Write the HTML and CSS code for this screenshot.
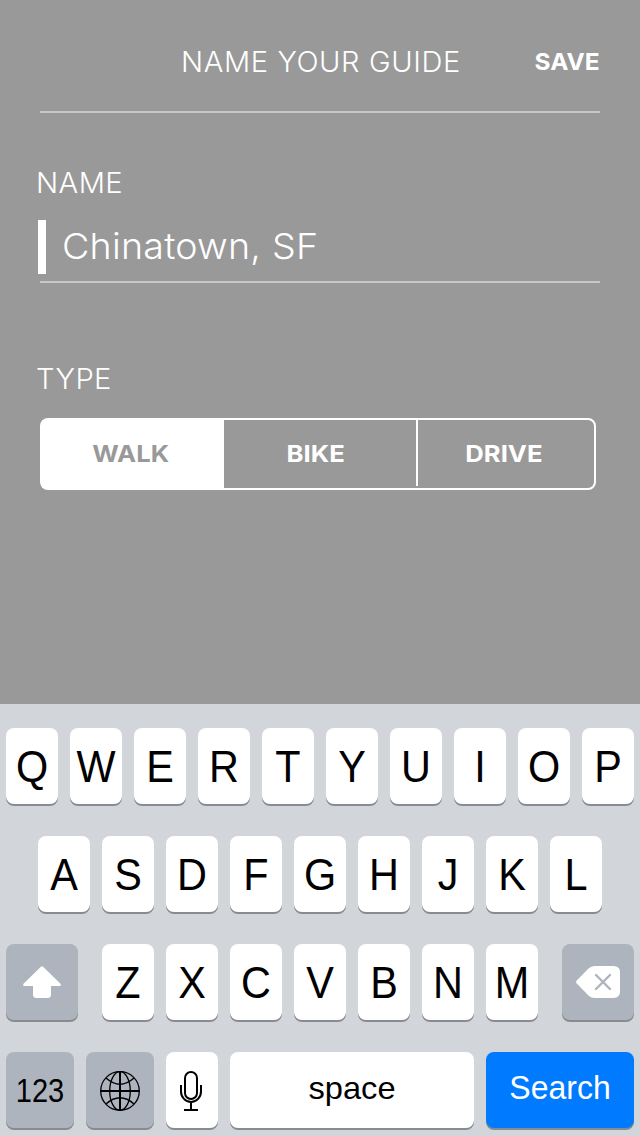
FILE: index.html
```html
<!DOCTYPE html>
<html lang="en">
<head>
<meta charset="utf-8">
<title>Name your guide</title>
<link rel="stylesheet" href="styles.css">
</head>
<body>
<main class="screen">
  <section class="form">
    <header class="header">
      <h1 class="title">NAME YOUR GUIDE</h1>
      <button class="save">SAVE</button>
    </header>
    <div class="field">
      <span class="label">NAME</span>
      <div class="entry"><i class="caret"></i><span class="value">Chinatown, SF</span></div>
    </div>
    <div class="kind">
      <span class="label label-type">TYPE</span>
      <div class="segments">
        <button class="segment segment-on"><span class="walk">WALK</span></button>
        <button class="segment segment-bike"><span class="bike">BIKE</span></button>
        <i class="divider"></i>
        <button class="segment segment-drive"><span class="drive">DRIVE</span></button>
      </div>
    </div>
  </section>
  <section class="keyboard">
    <div class="row">
      <button class="key"><span class="glyph">Q</span></button>
      <button class="key"><span class="glyph">W</span></button>
      <button class="key"><span class="glyph">E</span></button>
      <button class="key"><span class="glyph">R</span></button>
      <button class="key"><span class="glyph">T</span></button>
      <button class="key"><span class="glyph">Y</span></button>
      <button class="key"><span class="glyph">U</span></button>
      <button class="key"><span class="glyph">I</span></button>
      <button class="key"><span class="glyph">O</span></button>
      <button class="key"><span class="glyph">P</span></button>
    </div>
    <div class="row">
      <button class="key"><span class="glyph">A</span></button>
      <button class="key"><span class="glyph">S</span></button>
      <button class="key"><span class="glyph">D</span></button>
      <button class="key"><span class="glyph">F</span></button>
      <button class="key"><span class="glyph">G</span></button>
      <button class="key"><span class="glyph">H</span></button>
      <button class="key"><span class="glyph">J</span></button>
      <button class="key"><span class="glyph">K</span></button>
      <button class="key"><span class="glyph">L</span></button>
    </div>
    <div class="row row-split">
      <button class="key key-gray key-wide" aria-label="Shift">
        <svg class="icon" width="72" height="76" viewBox="0 0 72 76"><path fill="#fff" d="M34.9 22.700Q36 21.600 37.100 22.700L54.500 39.800Q55.600 42 53.500 42H45V50.500Q45 54 41.500 54H30.500Q27 54 27 50.500V42H18.500Q16.400 42 17.500 39.800Z"/></svg>
      </button>
      <div class="letters">
        <button class="key"><span class="glyph">Z</span></button>
        <button class="key"><span class="glyph">X</span></button>
        <button class="key"><span class="glyph">C</span></button>
        <button class="key"><span class="glyph">V</span></button>
        <button class="key"><span class="glyph">B</span></button>
        <button class="key"><span class="glyph">N</span></button>
        <button class="key"><span class="glyph">M</span></button>
      </div>
      <button class="key key-gray key-wide" aria-label="Delete">
        <svg class="icon" width="72" height="76" viewBox="0 0 72 76"><path fill="#fff" d="M14.700 39.500Q13.300 38 14.700 36.500L26.500 24.500Q29 22 32.500 22H51.500Q58 22 58 28.500V47.500Q58 54 51.500 54H32.500Q29 54 26.500 51.500Z"/><path d="M34 31l14 14M48 31l-14 14" fill="none" stroke="#adb4be" stroke-width="2.400" stroke-linecap="round"/></svg>
      </button>
    </div>
    <div class="row">
      <button class="key key-gray key-mid"><span class="digits">123</span></button>
      <button class="key key-gray key-mid" aria-label="Next keyboard">
        <svg class="icon" width="68" height="76" viewBox="0 0 68 76" fill="none" stroke="#000" stroke-width="1.300"><circle cx="34" cy="39" r="19.300"/><ellipse cx="34" cy="39" rx="10.300" ry="19.300"/><path d="M20 26Q34 38.500 48 26M20 52Q34 39.500 48 52"/><path d="M34 19.500v39M14.500 39h39" stroke-width="2"/></svg>
      </button>
      <button class="key" aria-label="Dictation">
        <svg class="icon" width="52" height="76" viewBox="0 0 52 76" fill="none" stroke="#000" stroke-width="2"><rect x="19" y="20" width="12" height="27" rx="6"/><path d="M15 33v6.500a10 10.500 0 0 0 20 0V33M25 50v8M18 58h14"/></svg>
      </button>
      <button class="key key-space"><span class="space">space</span></button>
      <button class="key key-search"><span class="search">Search</span></button>
    </div>
  </section>
</main>
</body>
</html>
```
FILE: styles.css
```css
* { box-sizing: border-box; }
body { margin: 0; }
button { margin: 0; padding: 0; border: 0; background: none; color: inherit; font: inherit; }
.screen { width: 640px; height: 1136px; display: flex; flex-direction: column; overflow: hidden; background: #999; color: #fff; }
.form { height: 704px; padding: 0 40px; font-family: Inter, sans-serif; }
.header { height: 113px; display: flex; justify-content: space-between; padding: 42px 0 0 141px; border-bottom: 2px solid #c8c8c8; }
.title { margin: 0; font-size: 28px; line-height: 40px; font-weight: 300; letter-spacing: 0.600px; white-space: nowrap; transform: scaleX(1.038); transform-origin: left; }
.save { height: 40px; line-height: 40px; font-size: 23.500px; font-weight: 700; transform: scaleX(1.040); transform-origin: right; }
.field { height: 170px; padding-top: 50px; border-bottom: 2px solid #c8c8c8; }
.label { display: block; width: 120px; height: 40px; margin-left: -4px; font-size: 28px; line-height: 40px; font-weight: 300; letter-spacing: 0.400px; transform: scaleX(1.042); transform-origin: left; }
.entry { display: flex; align-items: flex-start; height: 54px; margin: 17px 0 0 -2px; }
.caret { width: 8px; height: 54px; background: #fff; }
.value { margin-left: 16px; font-size: 36px; line-height: 52px; font-weight: 300; letter-spacing: 0.200px; white-space: nowrap; transform: scaleX(1.045); transform-origin: left; }
.kind { padding-top: 76px; }
.segments { display: flex; width: 556px; height: 72px; margin-top: 19px; border: 2px solid #fff; border-radius: 8px; font-size: 23.500px; font-weight: 700; line-height: 68px; }
.segment { height: 68px; }
.segment-on { width: 182px; background: #fff; color: #999; }
.segment-bike { width: 192px; }
.segment-drive { width: 176px; }
.walk, .bike, .drive { display: inline-block; transform: translateX(-2.500px) scaleX(1.090); }
.bike { transform: translateX(-4px) scaleX(1.090); }
.divider { width: 2px; height: 66px; background: #fff; }
.keyboard { height: 432px; padding: 24px 6px 0; display: flex; flex-direction: column; gap: 32px; background: #d2d5da; color: #000; font-family: "Liberation Sans", Arial, sans-serif; }
.row { display: flex; justify-content: center; gap: 12px; height: 76px; }
.row-split { justify-content: space-between; }
.letters { display: flex; gap: 12px; }
.key { flex: none; width: 52px; height: 76px; border-radius: 8px; background: #fff; box-shadow: 0 2px 0 #888b8f; font-size: 45px; line-height: 76px; text-align: center; white-space: nowrap; }
.glyph { display: block; transform: translateY(1px) scaleX(0.920); }
.key-gray { background: #adb4be; }
.key-wide { width: 72px; }
.key-mid { width: 68px; }
.key-space { width: 244px; }
.key-search { width: 148px; background: #007aff; color: #fff; }
.icon { display: block; }
.digits, .space, .search { display: block; height: 76px; font-size: 33px; line-height: 72px; }
.digits { line-height: 78px; transform: scaleX(0.880); }
.space { font-size: 32px; line-height: 73px; transform: scaleX(1.020); }
.search { transform: scaleX(0.970); }
```
